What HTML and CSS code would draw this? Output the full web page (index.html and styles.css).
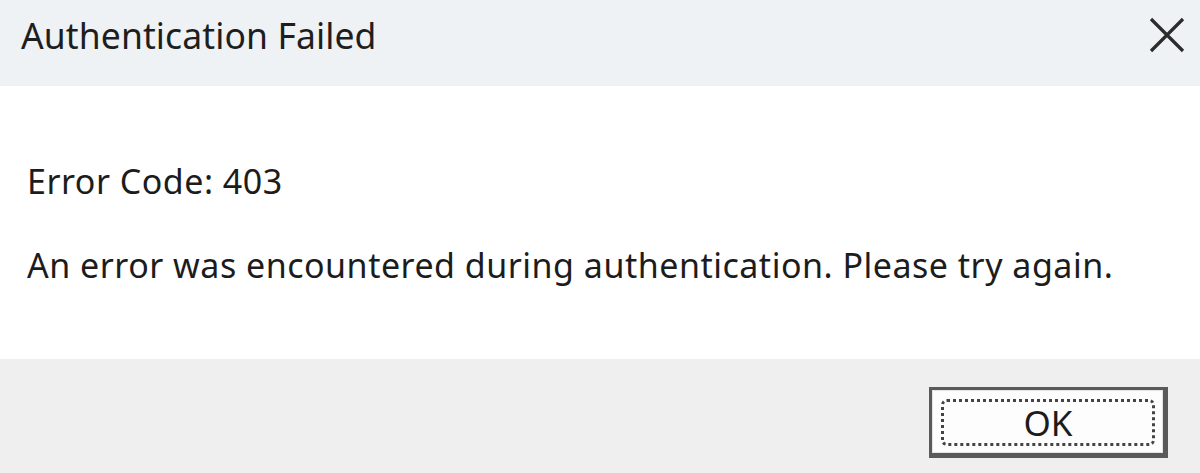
FILE: index.html
```html
<!DOCTYPE html>
<html>
<head>
<meta charset="utf-8">
<link rel="stylesheet" href="styles.css">
</head>
<body>
<div class="dialog">
  <div class="titlebar">
    <span class="title">Authentication Failed</span>
    <span class="close" aria-label="Close">
      <svg width="36" height="36" viewBox="0 0 36 36"><path d="M2 2 L34 34 M34 2 L2 34" stroke="#2b2b2b" stroke-width="3.2" fill="none"/></svg>
    </span>
  </div>
  <div class="content">
    <p class="code">Error Code: 403</p>
    <p class="msg">An error was encountered during authentication. Please try again.</p>
  </div>
  <div class="footer">
    <button class="ok"><span class="focus">OK</span></button>
  </div>
</div>
</body>
</html>
```
FILE: styles.css
```css
html, body {
  margin: 0;
  padding: 0;
}
body {
  width: 1200px;
  height: 473px;
  overflow: hidden;
  font-family: "Noto Sans", "Open Sans", sans-serif;
  color: #1c1c1c;
}
.dialog {
  display: flex;
  flex-direction: column;
  height: 473px;
}
.titlebar {
  height: 86px;
  background: #eef2f4;
  display: flex;
  align-items: center;
  justify-content: space-between;
  padding: 0 15px 0 21px;
  box-sizing: border-box;
}
.title {
  font-size: 35.5px;
  margin-top: -16px;
  letter-spacing: 0.1px;
  color: #1e1e1e;
}
.close {
  display: flex;
  margin-top: -16px;
}
.content {
  height: 273px;
  background: #ffffff;
  padding: 75px 0 0 27px;
  box-sizing: border-box;
}
.content p {
  margin: 0;
  font-size: 34px;
  line-height: 40px;
  letter-spacing: 0.5px;
}
.content .msg {
  margin-top: 44px;
}
.footer {
  flex: 1;
  background: #efefef;
  display: flex;
  justify-content: flex-end;
  align-items: flex-start;
  padding: 28px 32px 0 0;
  box-sizing: border-box;
}
.ok {
  width: 239px;
  height: 71px;
  box-sizing: border-box;
  border: 3px solid #5a5a5a;
  border-right-width: 5px;
  border-bottom-width: 5px;
  background: #fdfdfd;
  padding: 9px 8px 7px 9px;
  margin: 0;
  font-family: inherit;
  box-shadow: inset 0 0 0 1px #e4e4e4;
  display: flex;
}
.focus {
  flex: 1;
  border: 3px dotted #444;
  border-radius: 6px;
  display: flex;
  align-items: center;
  justify-content: center;
  font-size: 35px;
  color: #1c1c1c;
}
```
